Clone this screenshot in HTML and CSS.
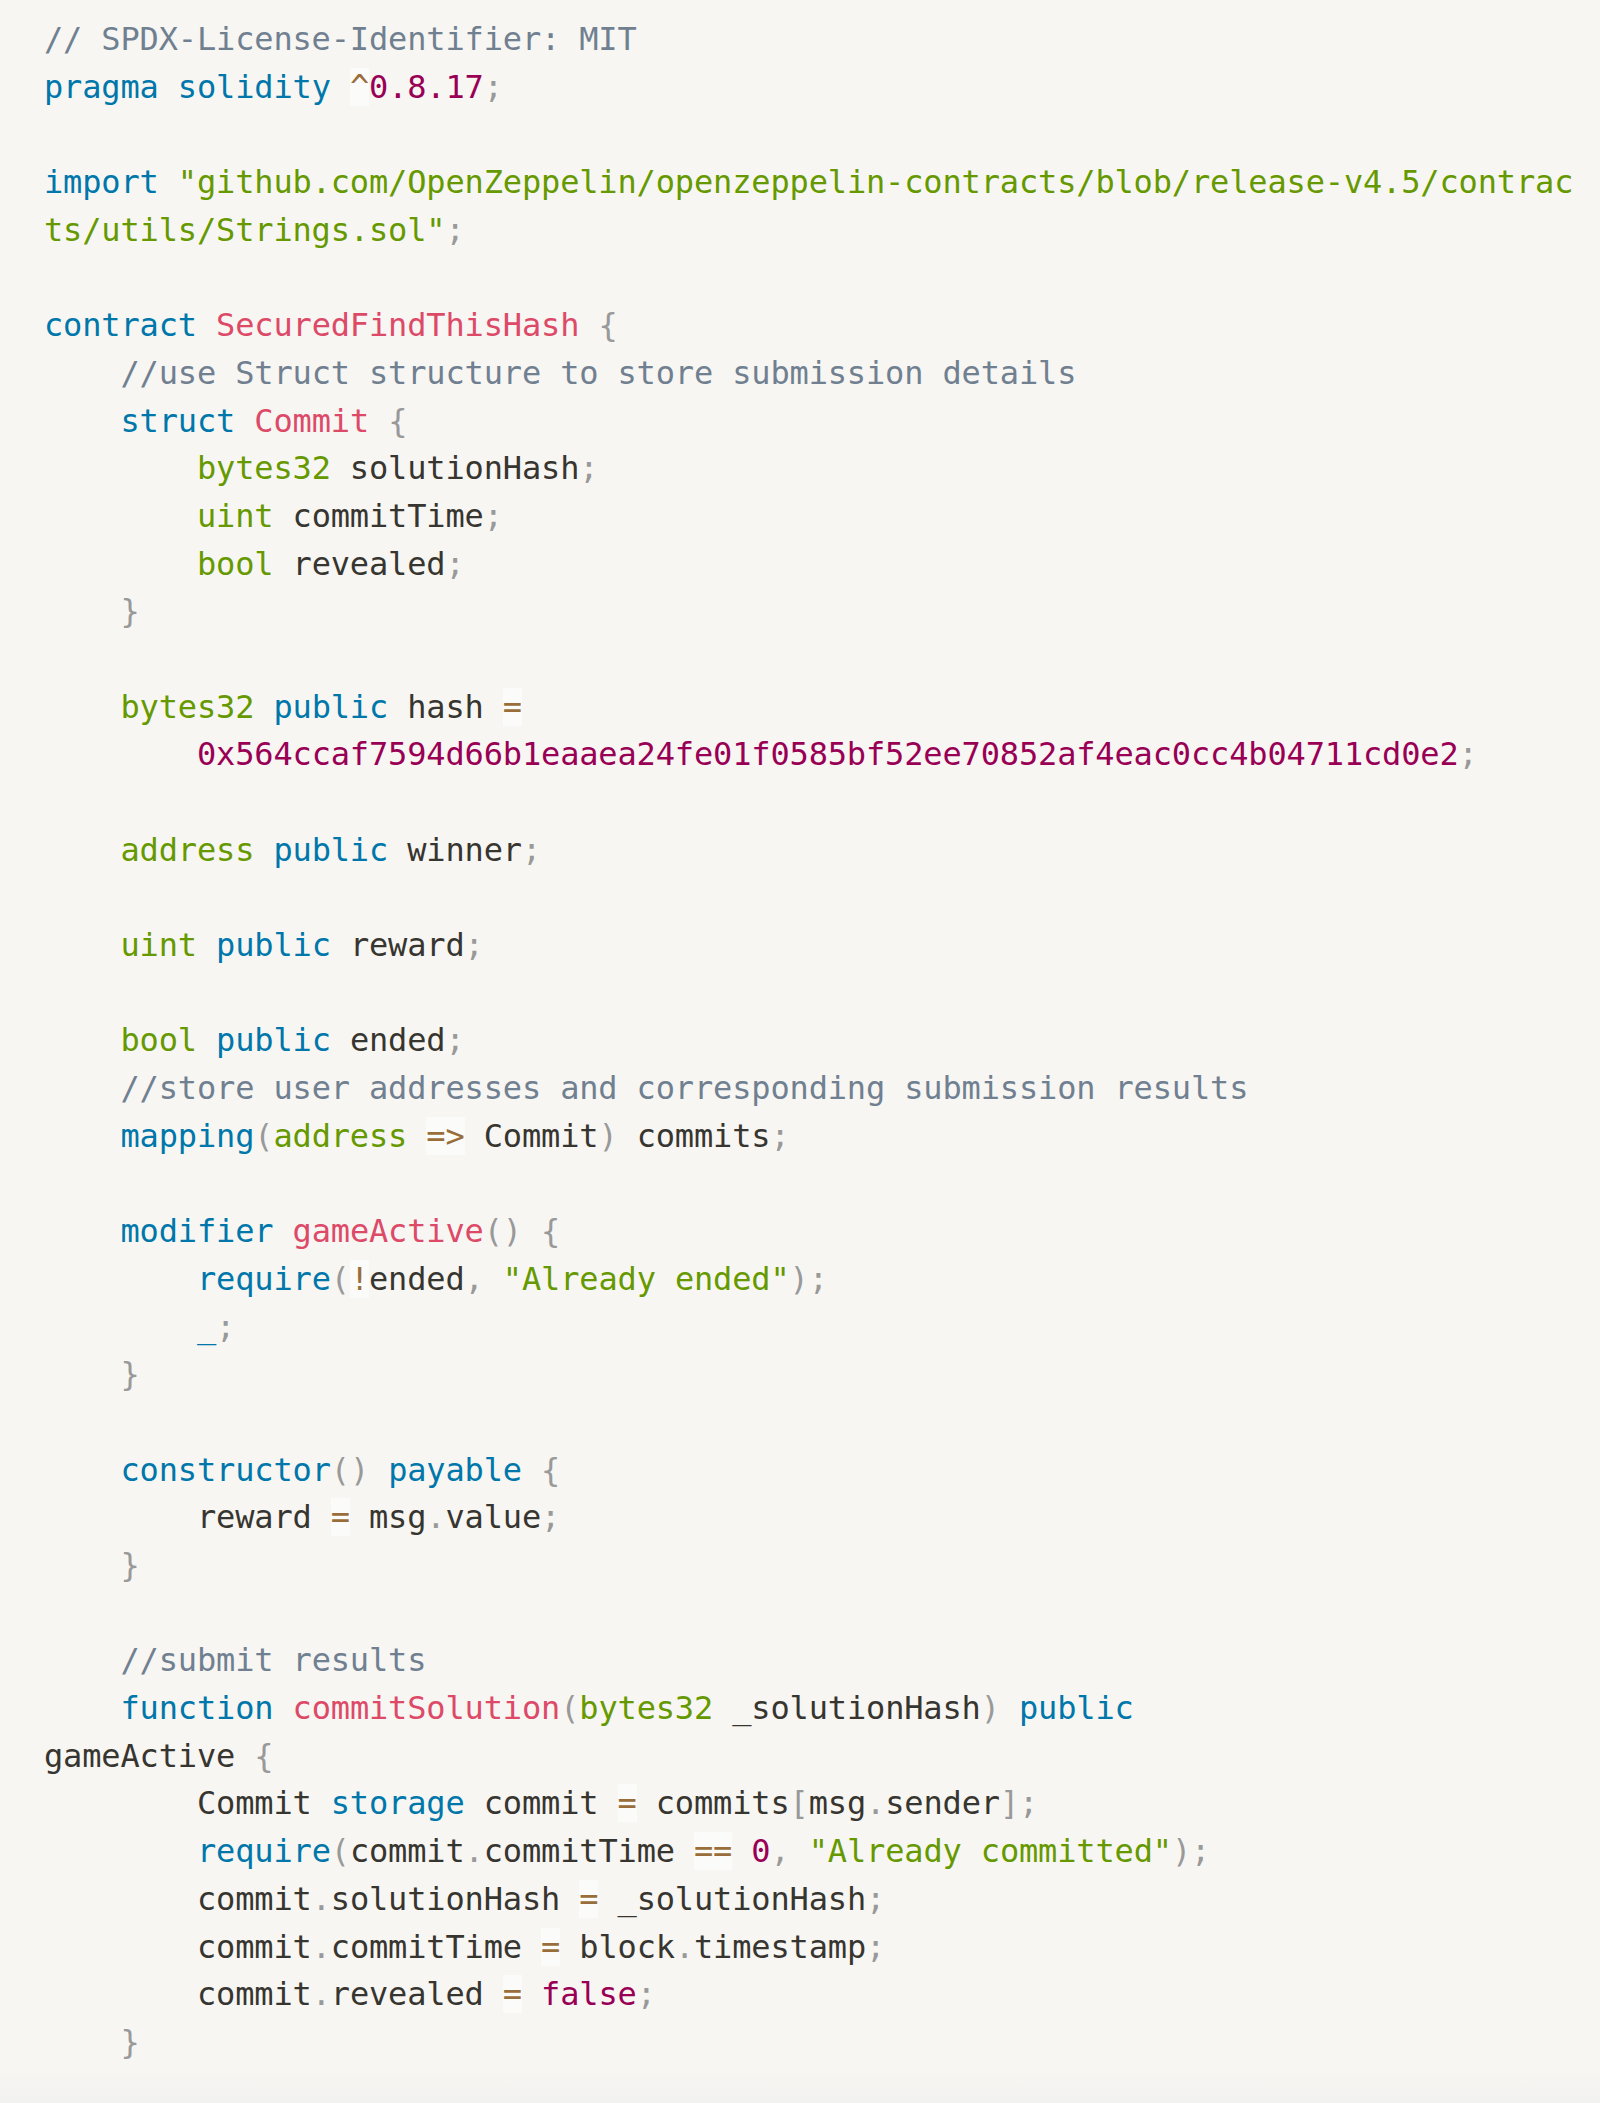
FILE: index.html
```html
<!DOCTYPE html>
<html lang="en">
<head>
<meta charset="utf-8">
<title>SecuredFindThisHash.sol</title>
<link rel="stylesheet" href="styles.css">
</head>
<body>
<main class="page">
<pre class="code"><code><span class="c">// SPDX-License-Identifier: MIT</span>
<span class="k">pragma</span> <span class="k">solidity</span> <span class="o">^</span><span class="n">0.8.17</span><span class="p">;</span>

<span class="k">import</span> <span class="s">"github.com/OpenZeppelin/openzeppelin-contracts/blob/release-v4.5/contracts/utils/Strings.sol"</span><span class="p">;</span>

<span class="k">contract</span> <span class="f">SecuredFindThisHash</span> <span class="p">{</span>
    <span class="c">//use Struct structure to store submission details</span>
    <span class="k">struct</span> <span class="f">Commit</span> <span class="p">{</span>
        <span class="b">bytes32</span> solutionHash<span class="p">;</span>
        <span class="b">uint</span> commitTime<span class="p">;</span>
        <span class="b">bool</span> revealed<span class="p">;</span>
    <span class="p">}</span>

    <span class="b">bytes32</span> <span class="k">public</span> hash <span class="o">=</span>
        <span class="n">0x564ccaf7594d66b1eaaea24fe01f0585bf52ee70852af4eac0cc4b04711cd0e2</span><span class="p">;</span>

    <span class="b">address</span> <span class="k">public</span> winner<span class="p">;</span>

    <span class="b">uint</span> <span class="k">public</span> reward<span class="p">;</span>

    <span class="b">bool</span> <span class="k">public</span> ended<span class="p">;</span>
    <span class="c">//store user addresses and corresponding submission results</span>
    <span class="k">mapping</span><span class="p">(</span><span class="b">address</span> <span class="o">=&gt;</span> Commit<span class="p">)</span> commits<span class="p">;</span>

    <span class="k">modifier</span> <span class="f">gameActive</span><span class="p">(</span><span class="p">)</span> <span class="p">{</span>
        <span class="k">require</span><span class="p">(</span><span class="o">!</span>ended<span class="p">,</span> <span class="s">"Already ended"</span><span class="p">)</span><span class="p">;</span>
        <span class="k">_</span><span class="p">;</span>
    <span class="p">}</span>

    <span class="k">constructor</span><span class="p">(</span><span class="p">)</span> <span class="k">payable</span> <span class="p">{</span>
        reward <span class="o">=</span> msg<span class="p">.</span>value<span class="p">;</span>
    <span class="p">}</span>

    <span class="c">//submit results</span>
    <span class="k">function</span> <span class="f">commitSolution</span><span class="p">(</span><span class="b">bytes32</span> _solutionHash<span class="p">)</span> <span class="k">public</span>
gameActive <span class="p">{</span>
        Commit <span class="k">storage</span> commit <span class="o">=</span> commits<span class="p">[</span>msg<span class="p">.</span>sender<span class="p">]</span><span class="p">;</span>
        <span class="k">require</span><span class="p">(</span>commit<span class="p">.</span>commitTime <span class="o">==</span> <span class="n">0</span><span class="p">,</span> <span class="s">"Already committed"</span><span class="p">)</span><span class="p">;</span>
        commit<span class="p">.</span>solutionHash <span class="o">=</span> _solutionHash<span class="p">;</span>
        commit<span class="p">.</span>commitTime <span class="o">=</span> block<span class="p">.</span>timestamp<span class="p">;</span>
        commit<span class="p">.</span>revealed <span class="o">=</span> <span class="n">false</span><span class="p">;</span>
    <span class="p">}</span></code></pre>
<div class="fade"></div>
</main>
</body>
</html>
```

FILE: styles.css
```css
html, body {
  margin: 0;
  padding: 0;
  background: #f7f6f3;
}

.page {
  display: flex;
  flex-direction: column;
  min-height: 2103px;
}

.code {
  margin: 0;
  padding: 16px 20px 0 44px;
  background: #f7f6f3;
  color: #37352f;
  font-family: "DejaVu Sans Mono", "Liberation Mono", monospace;
  font-size: 32px;
  letter-spacing: -0.15px;
  line-height: 47.68px;
  white-space: pre-wrap;
  word-break: break-all;
  tab-size: 4;
}

.code code {
  font: inherit;
}

.fade {
  flex: 1;
  background: linear-gradient(#f7f6f3, #f2f2f0);
}

.c { color: #708090; }
.p { color: #999999; }
.k { color: #0077aa; }
.f { color: #dd4a68; }
.s { color: #669900; }
.b { color: #669900; }
.n { color: #990055; }
.o {
  color: #9a6e3a;
  background: rgba(255, 255, 255, 0.5);
}
```
